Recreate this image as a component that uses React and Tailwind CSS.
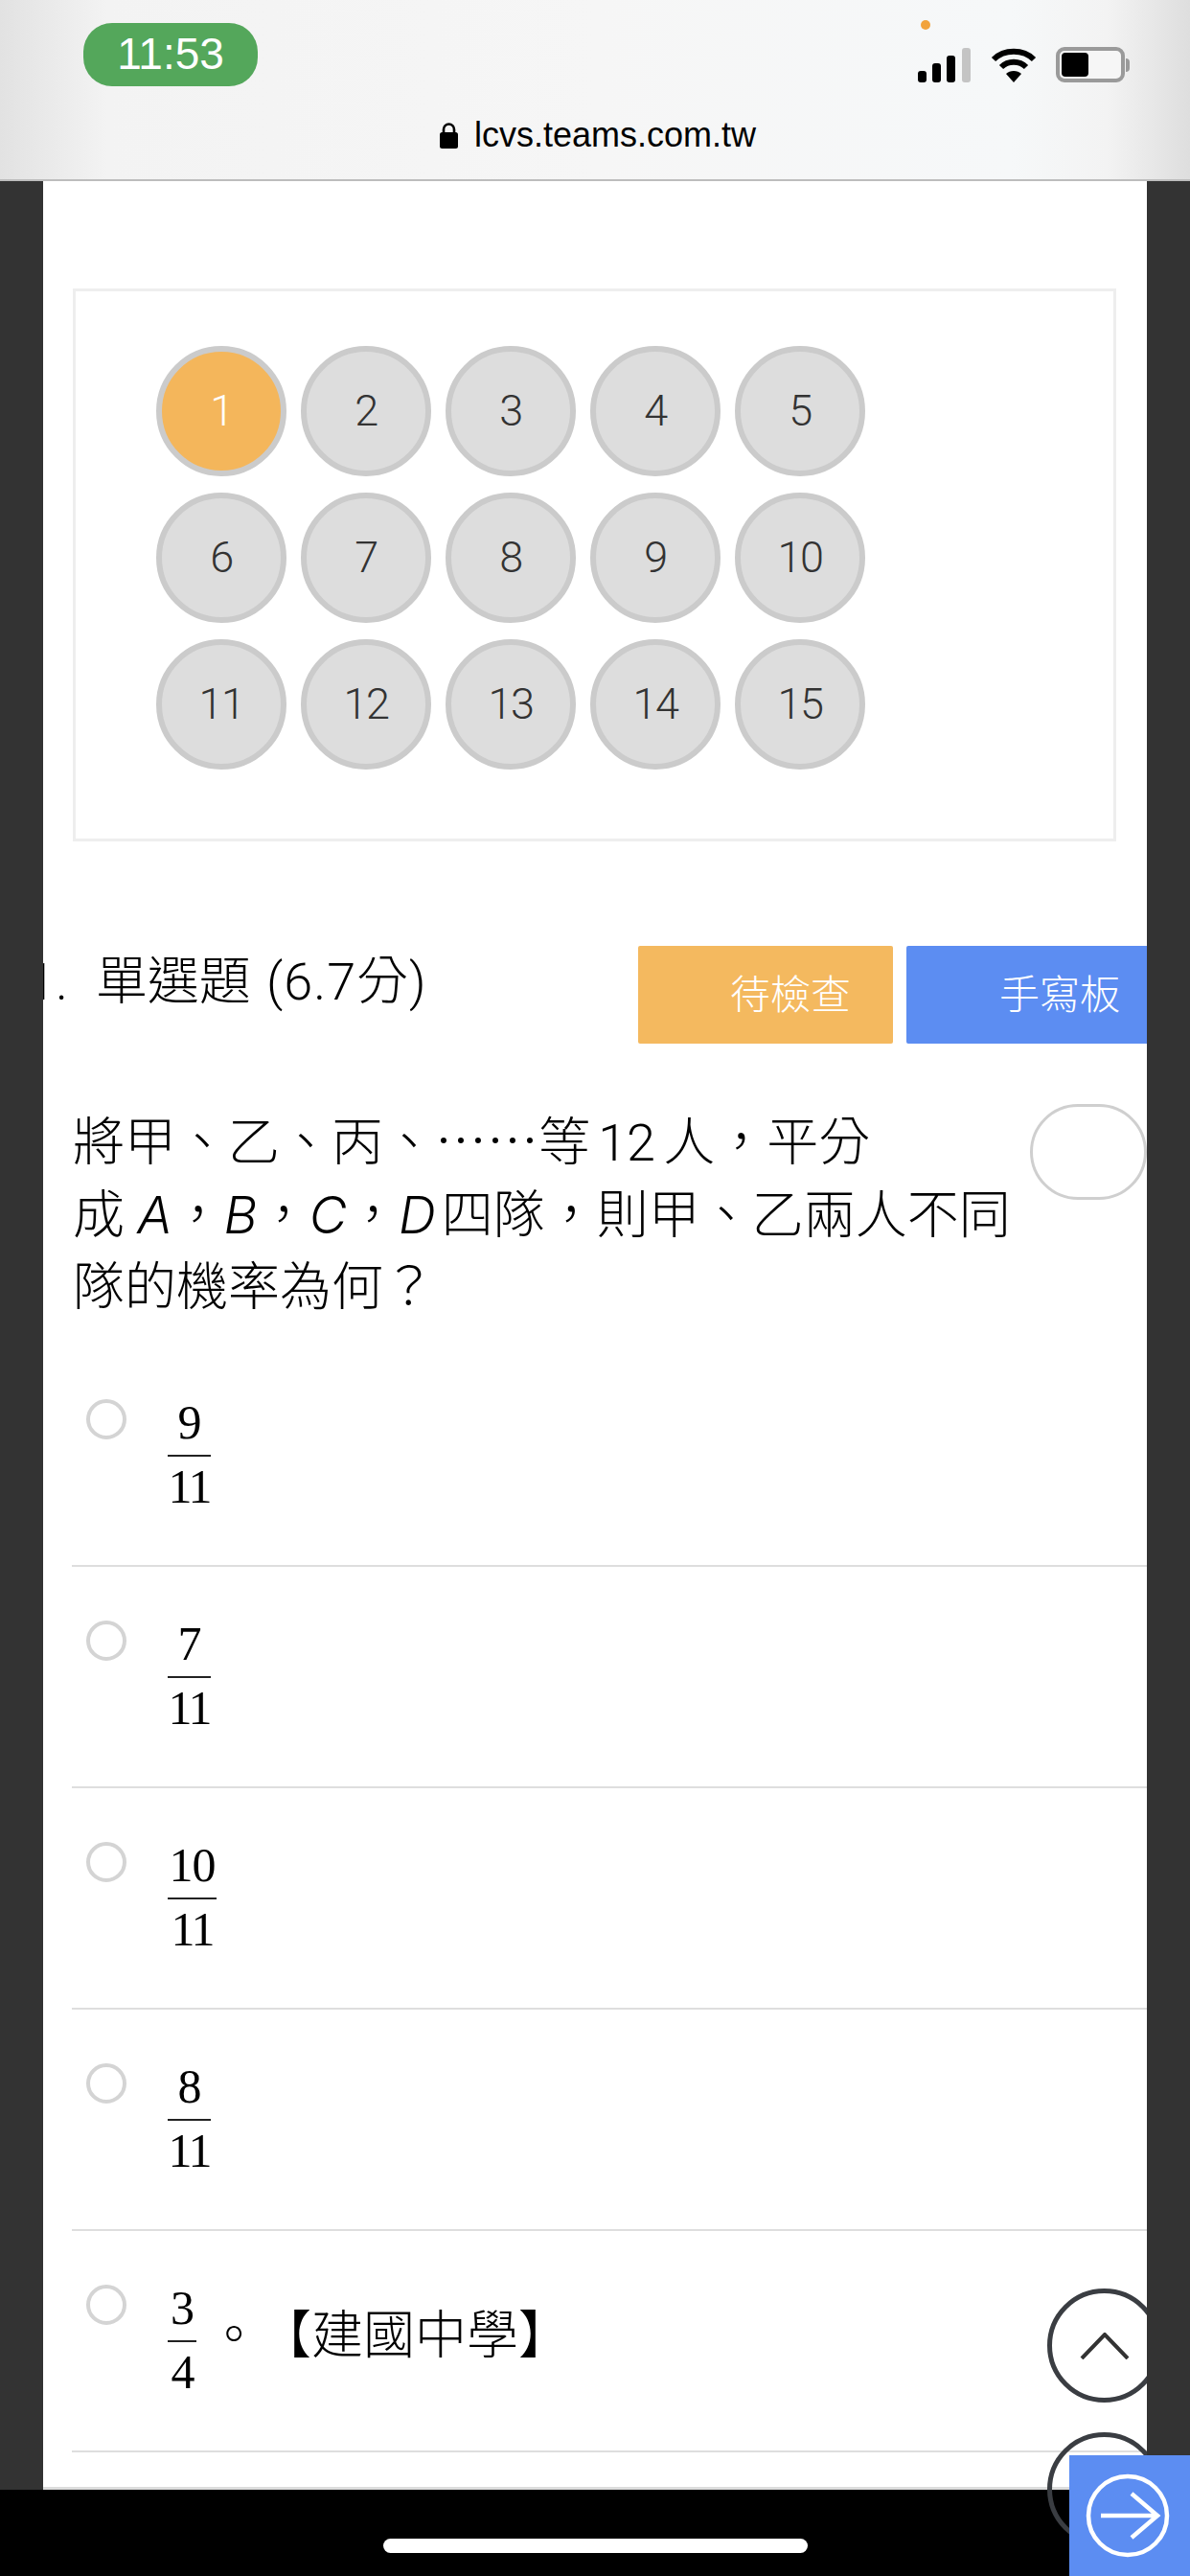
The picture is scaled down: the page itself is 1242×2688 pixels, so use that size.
const numbers = Array.from({ length: 15 }, (_, i) => i + 1);

const options = [
  { n: "9", d: "11", w: "w-[45px]" },
  { n: "7", d: "11", w: "w-[45px]" },
  { n: "10", d: "11", w: "w-[51px]" },
  { n: "8", d: "11", w: "w-[45px]" },
  { n: "3", d: "4", w: "w-[30px]", tail: true },
];

const sans = "font-['Roboto','Noto_Sans_CJK_TC',sans-serif]";

function Letter({ children }) {
  return <i className="font-['Inter',sans-serif] font-light">{children}</i>;
}

function Fraction({ n, d, w }) {
  return (
    <div className={`${w} flex flex-col items-center font-['Liberation_Serif',serif] text-[50px] text-black leading-[50px] font-normal`}>
      <div className="h-[50px] tracking-[-1px] whitespace-nowrap">{n}</div>
      <div className="h-[2px] w-full mt-[9px] mb-[6px] bg-[#222]" />
      <div className="h-[50px] tracking-[-2px] whitespace-nowrap">{d}</div>
    </div>
  );
}

function Option({ n, d, w, tail }) {
  return (
    <div className="h-[231px] pt-[56px] pl-[15px] flex items-start border-b-2 border-[#dedede]">
      <div className="w-[42px] h-[42px] rounded-full border-[4px] border-[#d4d4d4] bg-white shrink-0" />
      <div className="ml-[43px] -mt-[1px]">
        <Fraction n={n} d={d} w={w} />
      </div>
      {tail && (
        <div className={`${sans} font-light text-[54px] leading-[60px] text-black mt-[24px] ml-[12px] whitespace-nowrap`}>
          <span className="inline-block">。</span>
          <span className="inline-block">【建國中學】</span>
        </div>
      )}
    </div>
  );
}

function StatusIcons() {
  return (
    <div className="flex items-end gap-[20px] relative">
      <svg width="56" height="36" viewBox="0 0 56 36">
        <rect x="0" y="24" width="9" height="12" rx="3" fill="#000" />
        <rect x="15" y="16" width="9" height="20" rx="3" fill="#000" />
        <rect x="30" y="8" width="9" height="28" rx="3" fill="#000" />
        <rect x="46" y="0" width="9" height="36" rx="3" fill="#c4c4c4" />
      </svg>
      <svg width="48" height="36" viewBox="0 0 48 36" fill="none" stroke="#000" strokeWidth="6">
        <path d="M3 12 C14 1 34 1 45 12" />
        <path d="M11 20 C18 13 30 13 37 20" />
        <path d="M24 36 L16 27 C20 23 28 23 32 27 Z" fill="#000" stroke="none" />
      </svg>
      <div className="flex items-center">
        <div className="w-[72px] h-[37px] rounded-[9px] border-[4px] border-[#9a9a9a] bg-[#f6f6f6] p-[2px]">
          <div className="w-[28px] h-full rounded-[4px] bg-black" />
        </div>
        <div className="w-[4px] h-[14px] rounded-r-full bg-[#9a9a9a] ml-[1px]" />
      </div>
    </div>
  );
}

export default function App() {
  return (
    <div className="relative w-[1242px] h-[2688px] overflow-hidden bg-[#333333] flex flex-col">
      <header className="relative h-[189px] shrink-0 border-b-2 border-[#bdbdbd] bg-[linear-gradient(90deg,#e2e2e2_0%,#f3f3f3_9%,#f6f6f6_50%,#f6f8f9_85%,#f3f3f3_93%,#dedede_100%)]">
        <div className="flex items-start justify-between pt-[24px] pl-[87px] pr-[63px] h-[121px]">
          <div className="w-[182px] h-[66px] rounded-[30px] bg-[#54a75b] text-white text-[46px] leading-[64px] text-center font-['Liberation_Sans',sans-serif]">
            11:53
          </div>
          <div className="mt-[25px]">
            <StatusIcons />
          </div>
        </div>
        <div className="absolute left-[961px] top-[21px] w-[10px] h-[10px] rounded-full bg-[#f2a33c]" />
        <div className="flex items-center justify-center gap-[17px] text-black font-['Liberation_Sans',sans-serif] text-[36px] leading-[40px] pl-[6px]">
          <svg width="19" height="28" viewBox="0 0 19 28">
            <path d="M4 12 V8 a5.5 5.5 0 0 1 11 0 V12" fill="none" stroke="#000" strokeWidth="2.6" />
            <rect x="0" y="11" width="19" height="17" rx="2.5" fill="#000" />
          </svg>
          <span>lcvs.teams.com.tw</span>
        </div>
      </header>

      <main className="flex-1 min-h-0 mx-[45px] bg-white overflow-hidden border-b-[3px] border-[#dcdcdc]">
        <section className="mt-[112px] ml-[31px] mr-[32px] h-[577px] border-[3px] border-[#eeeeee] pt-[57px] pl-[84px]">
          <div className="grid grid-cols-[repeat(5,136px)] auto-rows-[136px] gap-x-[15px] gap-y-[17px]">
            {numbers.map((n) => (
              <div
                key={n}
                className={`rounded-full border-[6px] flex items-center justify-center ${sans} font-light text-[45px] tracking-[-1.5px] ${
                  n === 1
                    ? "bg-[#f4b65b] border-[#cbcbcb] text-white"
                    : "bg-[#dddddd] border-[#cbcbcb] text-[#333333]"
                }`}
              >
                {n}
              </div>
            ))}
          </div>
        </section>

        <section className="mt-[109px] h-[102px] flex items-start overflow-hidden">
          <div className={`${sans} font-light text-[54px] leading-[76px] text-black whitespace-nowrap -ml-[17px] flex-1`}>
            1.<span className="inline-block ml-[29px] [word-spacing:3px]">單選題 <span className="tracking-[1px]">(6.7分)</span></span>
          </div>
          <button className={`${sans} font-light w-[266px] h-[102px] bg-[#f4b95f] text-white text-[42px] text-right pr-[44px] rounded-[2px]`}>
            待檢查
          </button>
          <button className={`${sans} font-light w-[251px] h-[102px] ml-[14px] bg-[#5c8df2] text-white text-[42px] text-right pr-[28px] rounded-l-[2px]`}>
            手寫板
          </button>
        </section>

        <section className="mt-[63px] flex items-start">
          <div className={`${sans} font-light flex-1 -mt-[2px] pl-[31px] text-[54px] leading-[75px] text-black whitespace-nowrap`}>
            <span className="[word-spacing:-5px]">
              將甲、乙、丙、<span className="font-['Noto_Sans_CJK_TC',sans-serif]">……</span>等 12 人，平分
            </span>
            <br />
            成 <Letter>A</Letter>，<Letter>B</Letter>，<Letter>C</Letter>，<Letter>D</Letter><span className="ml-[6px]">四隊，則甲、乙兩人不同</span>
            <br />
            隊的機率為何？
          </div>
          <div className="w-[122px] h-[100px] rounded-[50px] border-[3px] border-[#cfcfcf] shrink-0" />
        </section>

        <section className="mt-[23px] ml-[30px]">
          {options.map((o) => (
            <Option key={o.n} {...o} />
          ))}
        </section>
      </main>

      <footer className="h-[90px] shrink-0 bg-black flex justify-center pt-[51px]">
        <div className="w-[443px] h-[15px] rounded-full bg-white" />
      </footer>

      <div className="absolute left-[1093px] top-[2388px] w-[104px] h-[119px] overflow-hidden">
        <div className="w-[119px] h-[119px] rounded-full border-[5px] border-[#3a3d42] flex items-center justify-center">
          <svg width="52" height="28" viewBox="0 0 52 28" fill="none" stroke="#333" strokeWidth="4">
            <path d="M2 27 L26 2 L50 27" />
          </svg>
        </div>
      </div>
      <div className="absolute left-[1093px] top-[2538px] w-[104px] h-[119px] overflow-hidden">
        <div className="w-[119px] h-[119px] rounded-full border-[5px] border-[#3a3d42]" />
      </div>
      <div className="absolute left-[1116px] top-[2562px] w-[126px] h-[126px] bg-[#5c8df2] flex items-center justify-center">
        <svg width="92" height="92" viewBox="0 0 92 92" fill="none" stroke="#fff" strokeWidth="4.5" className="-ml-[4px]">
          <circle cx="46" cy="46" r="41" />
          <path d="M18 46 H77 M50 23 L77 46 L50 69" />
        </svg>
      </div>
    </div>
  );
}
